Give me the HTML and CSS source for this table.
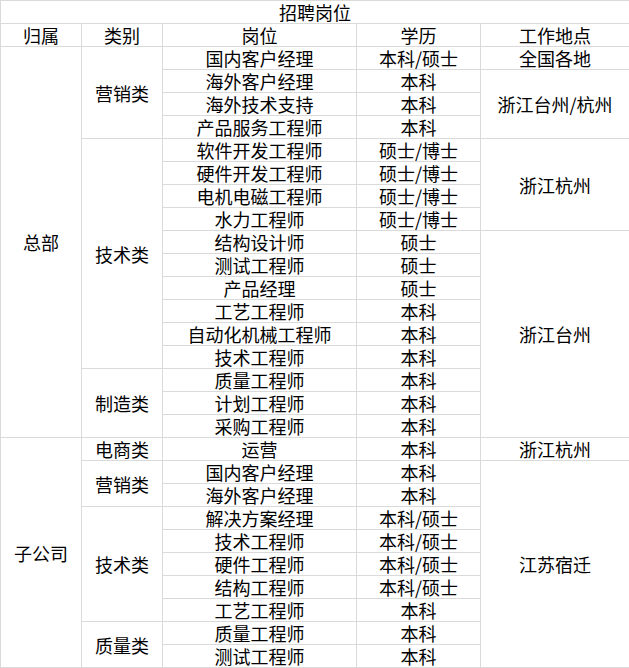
FILE: index.html
```html
<!DOCTYPE html>
<html lang="zh-CN">
<head>
<meta charset="utf-8">
<title>招聘岗位</title>
<link rel="stylesheet" href="styles.css">
</head>
<body>
<table class="jobs">
  <colgroup>
    <col class="c1"><col class="c2"><col class="c3"><col class="c4"><col class="c5">
  </colgroup>
  <thead>
    <tr><th colspan="5">招聘岗位</th></tr>
    <tr><th>归属</th><th>类别</th><th>岗位</th><th>学历</th><th>工作地点</th></tr>
  </thead>
  <tbody>
    <tr><td rowspan="17">总部</td><td rowspan="4">营销类</td><td>国内客户经理</td><td>本科/硕士</td><td>全国各地</td></tr>
    <tr><td>海外客户经理</td><td>本科</td><td rowspan="3">浙江台州/杭州</td></tr>
    <tr><td>海外技术支持</td><td>本科</td></tr>
    <tr><td>产品服务工程师</td><td>本科</td></tr>
    <tr><td rowspan="10">技术类</td><td>软件开发工程师</td><td>硕士/博士</td><td rowspan="4">浙江杭州</td></tr>
    <tr><td>硬件开发工程师</td><td>硕士/博士</td></tr>
    <tr><td>电机电磁工程师</td><td>硕士/博士</td></tr>
    <tr><td>水力工程师</td><td>硕士/博士</td></tr>
    <tr><td>结构设计师</td><td>硕士</td><td rowspan="9">浙江台州</td></tr>
    <tr><td>测试工程师</td><td>硕士</td></tr>
    <tr><td>产品经理</td><td>硕士</td></tr>
    <tr><td>工艺工程师</td><td>本科</td></tr>
    <tr><td>自动化机械工程师</td><td>本科</td></tr>
    <tr><td>技术工程师</td><td>本科</td></tr>
    <tr><td rowspan="3">制造类</td><td>质量工程师</td><td>本科</td></tr>
    <tr><td>计划工程师</td><td>本科</td></tr>
    <tr><td>采购工程师</td><td>本科</td></tr>
    <tr><td rowspan="10">子公司</td><td>电商类</td><td>运营</td><td>本科</td><td>浙江杭州</td></tr>
    <tr><td rowspan="2">营销类</td><td>国内客户经理</td><td>本科</td><td rowspan="9">江苏宿迁</td></tr>
    <tr><td>海外客户经理</td><td>本科</td></tr>
    <tr><td rowspan="5">技术类</td><td>解决方案经理</td><td>本科/硕士</td></tr>
    <tr><td>技术工程师</td><td>本科/硕士</td></tr>
    <tr><td>硬件工程师</td><td>本科/硕士</td></tr>
    <tr><td>结构工程师</td><td>本科/硕士</td></tr>
    <tr><td>工艺工程师</td><td>本科</td></tr>
    <tr><td rowspan="2">质量类</td><td>质量工程师</td><td>本科</td></tr>
    <tr><td>测试工程师</td><td>本科</td></tr>
  </tbody>
</table>
</body>
</html>
```

FILE: styles.css
```css
html, body {
  margin: 0;
  padding: 0;
  background: #ffffff;
}

.jobs {
  border-collapse: collapse;
  table-layout: fixed;
  width: 629px;
  font-family: "Noto Sans CJK SC", "Noto Sans", sans-serif;
  font-size: 18px;
  color: #000000;
}

.c1 { width: 81px; }
.c2 { width: 81px; }
.c3 { width: 194px; }
.c4 { width: 124px; }
.c5 { width: 149px; }

.jobs th,
.jobs td {
  border: 1px solid #dadada;
  padding: 0;
  height: 22px;
  line-height: 22px;
  text-align: center;
  vertical-align: middle;
  font-weight: normal;
  white-space: nowrap;
}
```
